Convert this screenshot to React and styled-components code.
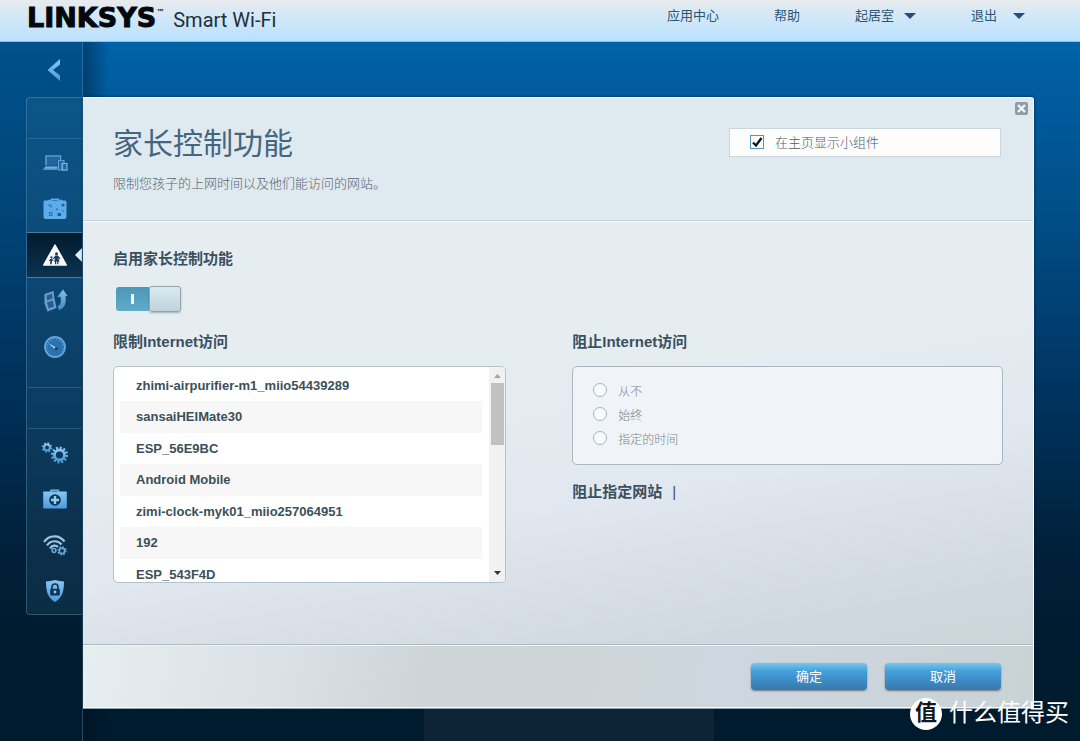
import { useState } from "react";
import styled, { createGlobalStyle, css } from "styled-components";

const devices = [
  "zhimi-airpurifier-m1_miio54439289",
  "sansaiHEIMate30",
  "ESP_56E9BC",
  "Android Mobile",
  "zimi-clock-myk01_miio257064951",
  "192",
  "ESP_543F4D",
];

const schedules = [
  { id: "never", label: "从不" },
  { id: "always", label: "始终" },
  { id: "specific", label: "指定的时间" },
];

const toolItems = [
  { id: "devices", label: "网络设备", Icon: DevicesIcon },
  { id: "guest", label: "访客访问", Icon: SuitcaseIcon },
  { id: "parental", label: "家长控制功能", Icon: ParentalIcon },
  { id: "media", label: "媒体优先级", Icon: MediaIcon },
  { id: "speed", label: "速度测试", Icon: GaugeIcon },
];

const settingItems = [
  { id: "connectivity", label: "连接", Icon: GearsIcon },
  { id: "troubleshooting", label: "故障排除", Icon: FirstAidIcon },
  { id: "wireless", label: "无线", Icon: WirelessIcon },
  { id: "security", label: "安全", Icon: ShieldIcon },
];

function App() {
  const [active, setActive] = useState("parental");
  const [enabled, setEnabled] = useState(true);
  const [showWidget, setShowWidget] = useState(true);

  return (
    <Page>
      <GlobalStyle />
      <SvgDefs />
      <Header>
        <Brand>
          <Logo>
            LINKSYS<sup>™</sup>
          </Logo>
          <Product>Smart Wi-Fi</Product>
        </Brand>
        <TopNav>
          <TopLink href="#apps">应用中心</TopLink>
          <TopLink href="#help">帮助</TopLink>
          <TopLink href="#network">
            起居室 <Caret />
          </TopLink>
          <TopLink href="#logout">
            退出 <Caret $far />
          </TopLink>
        </TopNav>
      </Header>

      <Main>
        <Gutter>
          <BackButton aria-label="返回">
            <svg width="14" height="24" viewBox="0 0 14 24">
              <path d="M13 1v5.500L6 12l7 5.500V23L0.500 12z" fill="url(#ice)" />
            </svg>
          </BackButton>
          <Menu>
            <MenuGap />
            <MenuGroup $tall>
              {toolItems.map(({ id, label, Icon }) => (
                <MenuItem
                  key={id}
                  aria-label={label}
                  $active={active === id}
                  onClick={() => setActive(id)}
                >
                  <Icon />
                </MenuItem>
              ))}
            </MenuGroup>
            <MenuGap />
            <MenuGroup>
              {settingItems.map(({ id, label, Icon }) => (
                <MenuItem
                  key={id}
                  aria-label={label}
                  $active={active === id}
                  onClick={() => setActive(id)}
                >
                  <Icon />
                </MenuItem>
              ))}
            </MenuGroup>
          </Menu>
        </Gutter>

        <Stage>
          <Dialog>
            <CloseButton aria-label="关闭">
              <svg width="13" height="13" viewBox="0 0 13 13">
                <path d="M3 3l7 7M10 3l-7 7" stroke="#f4f7f9" strokeWidth="2.400" />
              </svg>
            </CloseButton>
            <DialogHeader>
              <div>
                <Title>家长控制功能</Title>
                <Lead>限制您孩子的上网时间以及他们能访问的网站。</Lead>
              </div>
              <WidgetOption>
                <CheckBox
                  type="checkbox"
                  checked={showWidget}
                  onChange={(e) => setShowWidget(e.target.checked)}
                />
                在主页显示小组件
              </WidgetOption>
            </DialogHeader>

            <DialogBody>
              <SectionTitle id="enable-title">启用家长控制功能</SectionTitle>
              <Switch
                role="switch"
                aria-checked={enabled}
                aria-labelledby="enable-title"
                onClick={() => setEnabled((prev) => !prev)}
              >
                <SwitchSide>
                  <i />
                </SwitchSide>
                <Knob />
              </Switch>

              <Columns>
                <section>
                  <SectionTitle>限制Internet访问</SectionTitle>
                  <DeviceBox>
                    <DeviceList>
                      {devices.map((name) => (
                        <li key={name}>{name}</li>
                      ))}
                    </DeviceList>
                    <ScrollBar aria-hidden="true">
                      <svg width="7" height="4" viewBox="0 0 7 4">
                        <path d="M0 4h7L3.500 0z" fill="#a3a3a3" />
                      </svg>
                      <Thumb />
                      <svg width="7" height="4" viewBox="0 0 7 4">
                        <path d="M0 0h7L3.500 4z" fill="#333" />
                      </svg>
                    </ScrollBar>
                  </DeviceBox>
                </section>

                <section>
                  <SectionTitle id="block-title">阻止Internet访问</SectionTitle>
                  <RadioBox role="radiogroup" aria-labelledby="block-title">
                    {schedules.map(({ id, label }) => (
                      <RadioRow key={id}>
                        <Radio type="radio" name="schedule" value={id} />
                        {label}
                      </RadioRow>
                    ))}
                  </RadioBox>
                  <SitesRow>
                    <SectionTitle>阻止指定网站</SectionTitle>
                    <span>|</span>
                  </SitesRow>
                </section>
              </Columns>
            </DialogBody>

            <DialogFooter>
              <ActionButton>确定</ActionButton>
              <ActionButton>取消</ActionButton>
            </DialogFooter>
          </Dialog>
          <Backdrop />
        </Stage>
      </Main>

      <Watermark>
        <Seal>值</Seal>
        <SiteName>什么值得买</SiteName>
      </Watermark>
    </Page>
  );
}

export default App;

function SvgDefs() {
  return (
    <Defs width="0" height="0">
      <defs>
        <linearGradient id="ice" x1="0" y1="0" x2="0" y2="1">
          <stop offset="0" stopColor="#86c6f4" />
          <stop offset="1" stopColor="#4a9bdc" />
        </linearGradient>
        <linearGradient id="dim" x1="0" y1="0" x2="0" y2="1">
          <stop offset="0" stopColor="#86bde3" />
          <stop offset="1" stopColor="#4288c2" />
        </linearGradient>
      </defs>
    </Defs>
  );
}

function DevicesIcon() {
  return (
    <svg width="26" height="18" viewBox="0 0 26 18" fill="none">
      <path d="M4 11.500V2h14.500v4" stroke="#5f9fd0" strokeWidth="1.600" />
      <path d="M5 3h12.700v3h-2.200v5.500H5z" fill="#22659f" />
      <path d="M3.500 12.500h12V16H.500z" fill="url(#dim)" />
      <path d="M16.500 6.500h5.500v3h-2v6.500h-3.500z" fill="#22659f" stroke="#5f9fd0" strokeWidth="1.200" />
      <path d="M20.500 9.500h4.500v6.700h-4.500z" fill="#22659f" stroke="#74b4e4" strokeWidth="1.200" />
    </svg>
  );
}

function SuitcaseIcon() {
  return (
    <svg width="24" height="22" viewBox="0 0 24 22">
      <path d="M8.500 3V1.200h7V3" fill="none" stroke="#5fb0ee" strokeWidth="1.500" />
      <path
        d="M1.500 2.500h3l.5-.8h2l.5.8h9l.5-.8h2l.5.8h3q1 0 1 1.500v14.500q0 2.500-2 2.500h-19Q.500 21 .500 18.500V4q0-1.500 1-1.500z"
        fill="#5cabea"
      />
      <g fill="none" stroke="#2f73b0" strokeWidth="1.100">
        <path d="M5 7.500q1.500-1.500 3 0t-1 1.300" />
        <path d="M13 10.500l2 1.500" />
        <path d="M6.500 14.500h2.500v3H6.500z" />
      </g>
      <g fill="#235f97">
        <rect x="18.500" y="5.500" width="3" height="3" rx="1.500" />
        <rect x="14.500" y="15" width="3.500" height="3" />
        <rect x="19.500" y="12.500" width="1.200" height="1.200" />
      </g>
    </svg>
  );
}

function ParentalIcon() {
  return (
    <svg width="26" height="24" viewBox="0 0 26 24">
      <path d="M13 2L24.300 22H1.700z" fill="#f4f8fb" stroke="#f4f8fb" strokeWidth="1.500" strokeLinejoin="round" />
      <g fill="#1c3a54">
        <circle cx="14.500" cy="10.800" r="1.500" />
        <path d="M13.300 12.600h2.600l2.600 3-.6.700-1.700-1.300 1.400 3.400h-1.200v2.800h-1.200v-2.800h-1v2.800H13v-2.800h-1l1.200-3.300-1.700 1.200-.6-.8z" />
        <circle cx="9.400" cy="14.400" r="1.100" />
        <path d="M8.700 15.800h1.500l1.300 1.800-.6.500-.9-.8v3.900h-.7v-2h-.3v2h-.8v-3.900l-.9.800-.6-.5z" />
      </g>
    </svg>
  );
}

function MediaIcon() {
  return (
    <svg width="26" height="24" viewBox="0 0 26 24">
      <path d="M2.500 5L11.500 2l1 7.500 2 9.500-9 3.500-3-8z" fill="#6b9fc8" />
      <path d="M4.500 6.500l5.500-1.700.6 4.700-5.600 2zM4.800 13.500l6-2 1.200 6-5.300 2z" fill="#285f90" />
      <path
        d="M21 .500L25.700 7l-2.200.2C24.500 14 23 19 17 21l-1.500-3.800c3.300-1.200 3.900-5 3-9.500l-3.200.3z"
        fill="url(#dim)"
      />
    </svg>
  );
}

function GaugeIcon() {
  return (
    <svg width="24" height="24" viewBox="0 0 24 24" fill="none">
      <circle cx="12" cy="12" r="10" fill="#2b72ac" stroke="#5fa6dc" strokeWidth="1.800" />
      <path
        d="M5.400 16.500A8 8 0 1 1 18.600 16.500"
        stroke="#5a9fd4"
        strokeWidth="1.200"
        strokeDasharray="1 2"
      />
      <path d="M5 8l9 5-1.200 1.800z" fill="#b4dcf8" />
      <circle cx="13.200" cy="13.700" r="1.600" fill="#16466f" />
    </svg>
  );
}

function GearsIcon() {
  return (
    <svg width="28" height="24" viewBox="0 0 28 24" fill="none" stroke="url(#ice)">
      <circle cx="6" cy="6.500" r="2.900" strokeWidth="2" />
      <circle cx="6" cy="6.500" r="4.400" strokeWidth="1.600" strokeDasharray="1.700 1.756" />
      <circle cx="18.500" cy="14" r="5" strokeWidth="2.800" />
      <circle cx="18.500" cy="14" r="7.300" strokeWidth="2.400" strokeDasharray="2 1.822" />
    </svg>
  );
}

function FirstAidIcon() {
  return (
    <svg width="24" height="20" viewBox="0 0 24 20">
      <path d="M8 3V1.200h7.500V3" fill="none" stroke="#69b3ea" strokeWidth="1.500" />
      <path d="M1 2.500h22q.800 0 .800.800v15.400q0 .800-.800.800H1q-.8 0-.8-.8V3.300q0-.8.8-.8z" fill="url(#ice)" />
      <circle cx="12" cy="11" r="5.800" fill="#12354f" />
      <path d="M12 7v8M8 11h8" stroke="#8fd0fb" strokeWidth="2.400" />
    </svg>
  );
}

function WirelessIcon() {
  return (
    <svg width="26" height="22" viewBox="0 0 26 22" fill="none">
      <g stroke="#9cc3e0" strokeWidth="2.200">
        <path d="M2 8C7 .500 17.500 .500 22.500 7.500" />
        <path d="M5 11.500C8.500 6 16 6 19.500 10.500" />
        <path d="M8 14.500c2-3.500 6-3.500 8-1.500" />
      </g>
      <g stroke="#6fa9d4">
        <circle cx="12" cy="16.500" r="1.900" strokeWidth="1.500" />
        <circle cx="20" cy="16.800" r="2.700" strokeWidth="1.600" />
        <circle cx="20" cy="16.800" r="4" strokeWidth="1.400" strokeDasharray="1.600 1.542" />
      </g>
    </svg>
  );
}

function ShieldIcon() {
  return (
    <svg width="20" height="24" viewBox="0 0 20 24">
      <path d="M1 2.500q4-.5 9-1.500 5 1 9 1.500c0 9.500-1.500 16-9 20.500C2.500 18.500 1 12 1 2.500z" fill="url(#ice)" />
      <path d="M7 10V8a3 3 0 0 1 6 0v2" fill="none" stroke="#12354f" strokeWidth="1.600" />
      <rect x="5.200" y="9.800" width="9.600" height="6.700" rx="1" fill="#12354f" />
      <circle cx="10" cy="13" r="1.400" fill="#8fd0fb" />
    </svg>
  );
}

const GlobalStyle = createGlobalStyle`
  *, *::before, *::after {
    box-sizing: border-box;
  }

  body {
    margin: 0;
    color: #3b4f5e;
    font-family: "Liberation Sans", "Noto Sans CJK SC", sans-serif;
    font-size: 13px;
  }

  h1, h2, p, ul {
    margin: 0;
    padding: 0;
  }

  button {
    border: 0;
    padding: 0;
    background: none;
    font: inherit;
    cursor: pointer;
  }
`;

const Defs = styled.svg`
  display: block;
`;

const Page = styled.div`
  position: relative;
  display: flex;
  flex-direction: column;
  min-height: 100vh;
  overflow: hidden;
  background: linear-gradient(#0062a8 42px, #00508a 200px, #003765 370px, #001f38 560px, #001b2e 660px);
`;

const Header = styled.header`
  display: flex;
  justify-content: space-between;
  height: 42px;
  padding: 0 55px 0 27px;
  background: linear-gradient(#e8ebed, #d3e8f7 40%, #b9e1fd);
  border-bottom: 1px solid #8fc0e4;
`;

const Brand = styled.div`
  display: flex;
  align-items: baseline;
  gap: 9px;
  line-height: 36px;
`;

const Logo = styled.span`
  color: #05080b;
  font-family: "DejaVu Sans", sans-serif;
  font-size: 27px;
  font-weight: 700;
  -webkit-text-stroke: 1px #05080b;

  sup {
    font-size: 8px;
    line-height: 1;
    vertical-align: 12px;
    -webkit-text-stroke: 0;
  }
`;

const Product = styled.span`
  color: #22303c;
  font-family: Roboto, sans-serif;
  font-size: 20px;
`;

const TopNav = styled.nav`
  display: flex;
  gap: 55px;
  line-height: 32px;
`;

const TopLink = styled.a`
  display: flex;
  align-items: center;
  height: 32px;
  color: #2d5573;
  text-decoration: none;
`;

const Caret = styled.i`
  margin-left: ${({ $far }) => ($far ? 16 : 10)}px;
  border: 6px solid transparent;
  border-top-color: #1f5080;
  border-bottom-width: 0;
`;

const Main = styled.main`
  display: grid;
  grid-template-columns: 83px 1fr;
  flex: 1;
`;

const Gutter = styled.div`
  padding-left: 26px;
  background: linear-gradient(rgba(0, 20, 40, 0.22), rgba(0, 20, 40, 0.1) 400px, transparent 560px);
  border-right: 1px solid rgba(120, 180, 220, 0.3);
`;

const BackButton = styled.button`
  display: block;
  width: 100%;
  height: 55px;

  svg {
    display: block;
    margin-left: 21px;
  }
`;

const Menu = styled.nav`
  border: 1px solid rgba(130, 180, 220, 0.3);
  border-right: 0;
  border-radius: 4px 0 0 4px;
  background: rgba(60, 120, 150, 0.18);
`;

const MenuGap = styled.div`
  height: 40px;
`;

const MenuGroup = styled.div`
  padding: 1px 0 ${({ $tall }) => ($tall ? 17 : 0)}px;
  border-top: 1px solid rgba(130, 180, 220, 0.25);
  border-bottom: ${({ $tall }) => ($tall ? 1 : 0)}px solid rgba(130, 180, 220, 0.25);
`;

const MenuItem = styled.button`
  position: relative;
  display: flex;
  align-items: center;
  justify-content: center;
  width: 100%;
  height: 46px;

  ${({ $active }) =>
    $active &&
    css`
      background: linear-gradient(#02192d, #0c3350);
      border-top: 1px solid #4d7ca3;
      border-bottom: 1px solid #4d7ca3;

      &::after {
        content: "";
        position: absolute;
        right: 0;
        border: 7px solid transparent;
        border-right-color: #e8eef2;
        border-left-width: 0;
      }
    `}
`;

const Stage = styled.div`
  padding: 55px 46px 0 0;
  background: linear-gradient(90deg, rgba(0, 15, 30, 0.4), transparent 26px);
`;

const Dialog = styled.div`
  position: relative;
  border: 1px solid #f6fafc;
  border-left-width: 0;
  border-radius: 0 3px 0 0;
  background: linear-gradient(170deg, #e6edf1 45%, #e0e7ef 64%, #d0d8df 84%, #c7d2d5);
  box-shadow: 0 1px 0 #8f9ea6, 0 0 3px #00203a;
`;

const CloseButton = styled.button`
  position: absolute;
  top: 4px;
  right: 5px;
  width: 13px;
  height: 13px;
  border-radius: 2px;
  background: #8d9ba7;

  svg {
    display: block;
  }
`;

const DialogHeader = styled.div`
  display: flex;
  justify-content: space-between;
  align-items: flex-start;
  height: 123px;
  padding: 28px 32px 0 30px;
  background: #dfe9f0;
  border-bottom: 1px solid #c3d0d9;
  box-shadow: 0 1px 0 #f5f9fb;
`;

const Title = styled.h1`
  color: #44667e;
  font-size: 30px;
  font-weight: 400;
  line-height: 36px;
`;

const Lead = styled.p`
  margin-top: 12px;
  color: #566672;
  font-weight: 300;
  line-height: 20px;
`;

const WidgetOption = styled.label`
  display: flex;
  align-items: center;
  gap: 11px;
  width: 272px;
  height: 29px;
  margin-top: 2px;
  padding: 0 20px 2px;
  border: 1px solid #cbd5dc;
  background: #fdfdfb;
  color: #4c5c68;
  font-weight: 300;
`;

const CheckBox = styled.input`
  appearance: none;
  width: 14px;
  height: 14px;
  margin: 0;
  border: 1px solid #4f9bb0;
  background: #fff;

  &:checked {
    background: #fff
      url("data:image/svg+xml,%3Csvg xmlns='http://www.w3.org/2000/svg' viewBox='0 0 12 12'%3E%3Cpath d='M2 6.500l3 3L10.500 2' fill='none' stroke='%230c1a24' stroke-width='2.400'/%3E%3C/svg%3E");
  }
`;

const DialogBody = styled.div`
  min-height: 423px;
  padding: 28px 30px 0;
`;

const SectionTitle = styled.h2`
  color: #3b505f;
  font-size: 15px;
  font-weight: 700;
  line-height: 20px;
`;

const Switch = styled.button`
  display: flex;
  flex-direction: ${(props) => (props["aria-checked"] ? "row" : "row-reverse")};
  align-items: center;
  width: 65px;
  height: 26px;
  margin: 17px 0 0 3px;
`;

const SwitchSide = styled.span`
  display: flex;
  align-items: center;
  justify-content: center;
  flex: 1;
  height: 24px;
  border-radius: 3px 0 0 3px;
  background: linear-gradient(#4b97b6, #62acca);

  i {
    width: 3px;
    height: 10px;
    background: #eef8fc;
  }
`;

const Knob = styled.span`
  width: 32px;
  height: 26px;
  border: 1px solid #94a4ae;
  border-radius: 3px;
  background: linear-gradient(#dcebf1, #bfd3db);
  box-shadow: 0 1px 2px rgba(60, 80, 95, 0.4);
`;

const Columns = styled.div`
  display: grid;
  grid-template-columns: 21fr 23fr;
  gap: 66px;
  margin-top: 20px;
`;

const DeviceBox = styled.div`
  display: flex;
  height: 217px;
  margin-top: 14px;
  overflow: hidden;
  border: 1px solid #b3c2cc;
  border-radius: 5px;
  background: #fff;
`;

const DeviceList = styled.ul`
  flex: 1;
  padding: 3px 7px 0 6px;
  overflow: hidden;
  list-style: none;

  li {
    height: 31px;
    padding-left: 16px;
    color: #3b505a;
    font-weight: 700;
    line-height: 31px;
  }

  li:nth-child(even) {
    height: 32px;
    background: #f7f7f7;
  }
`;

const ScrollBar = styled.div`
  display: flex;
  flex-direction: column;
  align-items: center;
  width: 16px;
  padding: 7px 0;
  background: #f1f1f1;

  svg:last-child {
    margin-top: auto;
  }
`;

const Thumb = styled.div`
  width: 13px;
  height: 62px;
  margin-top: 5px;
  background: #c1c1c1;
`;

const RadioBox = styled.div`
  margin-top: 14px;
  padding: 11px 20px 14px;
  border: 1px solid #aab7c2;
  border-radius: 5px;
  background: #f0f4f8;
`;

const RadioRow = styled.label`
  display: flex;
  align-items: center;
  gap: 11px;
  height: 24px;
  color: #7c848a;
  font-size: 12px;
  font-weight: 300;
`;

const Radio = styled.input`
  appearance: none;
  width: 14px;
  height: 14px;
  margin: 0;
  border: 1px solid #9db7c6;
  border-radius: 50%;
  background: #f8fbfd;

  &:checked {
    box-shadow: inset 0 0 0 3px #f8fbfd;
    background: #3b6f90;
  }
`;

const SitesRow = styled.div`
  display: flex;
  align-items: center;
  gap: 10px;
  margin-top: 17px;

  span {
    font-size: 15px;
    line-height: 20px;
  }
`;

const DialogFooter = styled.div`
  display: flex;
  justify-content: flex-end;
  gap: 18px;
  height: 63px;
  padding: 18px 32px 0;
  border-top: 1px solid #aeb9c1;
  box-shadow: inset 0 1px 0 #eff4f6;
  background: linear-gradient(100deg, #e6eef0, #d9e0e6 22%, #ced5d9 36%, #cdd5d8 50%, #ced7df 68%, #c9d2d5);
`;

const ActionButton = styled.button`
  width: 116px;
  height: 27px;
  padding-bottom: 3px;
  border-radius: 4px;
  background: linear-gradient(#72c8ee, #469fd9 30%, #3d8fcb 60%, #3a77a8);
  box-shadow: 0 1px 2px rgba(40, 60, 80, 0.6);
  color: #fff;
`;

const Backdrop = styled.div`
  width: 290px;
  height: 33px;
  margin-left: 341px;
  background: linear-gradient(#0d2636, #0d2236);
`;

const Watermark = styled.div`
  position: absolute;
  right: 11px;
  bottom: 11px;
  display: flex;
  align-items: flex-start;
  gap: 7px;
  color: #fff;
  font-size: 24px;
`;

const Seal = styled.span`
  width: 32px;
  height: 32px;
  border-radius: 50%;
  background: #fff;
  color: #101820;
  font-size: 22px;
  font-weight: 700;
  line-height: 30px;
  text-align: center;
`;

const SiteName = styled.span`
  line-height: 30px;
`;
